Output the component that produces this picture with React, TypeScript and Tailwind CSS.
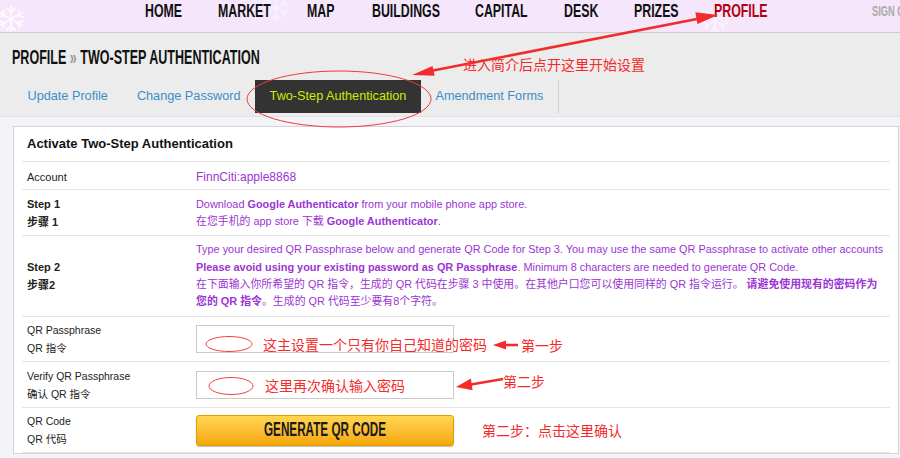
const heavy = "font-['Liberation_Sans',sans-serif] font-bold";
const body = "font-['Liberation_Sans','Noto_Sans_CJK_SC',sans-serif]";
const cjkRed = "font-['Noto_Sans_CJK_SC',sans-serif] text-[#f52a2a] text-[14px] leading-[20px] whitespace-nowrap";

// widths are the squeezed widths of each word in the reference
const navItems = [
  { label: "HOME", w: "w-[37px]" },
  { label: "MARKET", w: "w-[53px]" },
  { label: "MAP", w: "w-[29px]" },
  { label: "BUILDINGS", w: "w-[67px]" },
  { label: "CAPITAL", w: "w-[53px]" },
  { label: "DESK", w: "w-[34px]" },
  { label: "PRIZES", w: "w-[44px]" },
  { label: "PROFILE", w: "w-[51px]" },
];
const tabs = ["Update Profile", "Change Password", "Two-Step Authentication", "Amendment Forms"];

function Snowflake({ className }: { className: string }) {
  return (
    <svg className={className} viewBox="0 0 30 30" fill="none" stroke="#ffffff" strokeWidth="2" strokeLinecap="round">
      <path d="M15 2v26M3.7 8.5l22.6 13M3.7 21.5l22.6-13" />
      <path d="M11 4l4 4 4-4M11 26l4-4 4 4M3 13l5 -1.5-1-5M27 17l-5 1.5 1 5M3 17l5 1.5-1 5M27 13l-5-1.5 1-5" />
    </svg>
  );
}

function TopNav() {
  return (
    <header className="relative h-[33px] bg-[#f5e6fc] border-b border-[#cccccc] overflow-hidden">
      <Snowflake className="absolute left-[-4px] top-[4px] w-[30px] h-[30px] opacity-80" />
      <Snowflake className="absolute left-[262px] top-[-6px] w-[28px] h-[28px] opacity-40" />
      <Snowflake className="absolute left-[700px] top-[6px] w-[30px] h-[30px] opacity-50" />
      <nav className={`relative flex items-center h-[22px] pl-[145px] gap-[36px] ${heavy}`}>
        {navItems.map((item) => (
          <span key={item.label} className={`${item.w} shrink-0 leading-[20px]`}>
            <span
              className={`inline-block origin-left scale-x-[0.65] text-[19px] whitespace-nowrap ${
                item.label === "PROFILE" ? "text-[#b3000e]" : "text-[#111111]"
              }`}
            >
              {item.label}
            </span>
          </span>
        ))}
        <span className="ml-[71px] w-[40px] shrink-0 leading-[20px]">
          <span className="inline-block origin-left scale-x-[0.62] text-[15px] text-[#a9a9a9] whitespace-nowrap">
            SIGN OUT
          </span>
        </span>
      </nav>
    </header>
  );
}

function PageHeader() {
  return (
    <section className="h-[84px] bg-[#ececec] border-b border-[#e2e2e2]">
      <h1 className={`pt-[13px] pl-[12px] h-[34px] leading-[22px] text-[21px] text-[#111111] ${heavy}`}>
        <span className="inline-block w-[248px]">
          <span className="inline-block origin-left scale-x-[0.597] whitespace-nowrap">
            PROFILE <span className="text-[#9a9a9a]">»</span> TWO-STEP AUTHENTICATION
          </span>
        </span>
      </h1>
      <div className={`mt-[13px] ml-[13px] flex h-[33px] text-[12.7px] ${body}`}>
        {tabs.map((t) => {
          const active = t === "Two-Step Authentication";
          return (
            <div
              key={t}
              className={`flex items-center px-[14.5px] whitespace-nowrap ${
                active ? "bg-[#333333] text-[#c8ee00]" : "text-[#3b8ec9]"
              } ${t === "Amendment Forms" ? "border-r border-[#cfcfcf]" : ""}`}
            >
              {t}
            </div>
          );
        })}
      </div>
    </section>
  );
}

function Row({
  label,
  className = "",
  children,
}: {
  label: React.ReactNode;
  className?: string;
  children: React.ReactNode;
}) {
  return (
    <div className={`grid grid-cols-[174px_1fr] items-center border-b border-[#e6e6e6] ${className}`}>
      <div className="pl-[5px] text-[#222222]">{label}</div>
      <div>{children}</div>
    </div>
  );
}

function InputBox() {
  return <div className="h-[28px] w-[258px] border border-[#c9c9c9] bg-white" />;
}

function Panel() {
  return (
    <div className={`ml-[13px] w-[886px] border border-[#d3d3d3] bg-white px-[8px] ${body}`}>
      <div className="flex h-[35px] items-center border-b border-[#e6e6e6] pl-[5px] text-[13px] font-bold text-[#111111]">
        Activate Two-Step Authentication
      </div>

      <Row label={<span className="text-[11px]">Account</span>} className="h-[28px]">
        <span className="text-[12px] text-[#9b35d3]">FinnCiti:apple8868</span>
      </Row>

      <Row
        label={
          <div className="text-[11px] font-bold leading-[18px]">
            <div>Step 1</div>
            <div>步骤 1</div>
          </div>
        }
        className="h-[46px]"
      >
        <div className="text-[10.9px] leading-[17px] text-[#9b35d3] whitespace-nowrap">
          <div>
            Download <b>Google Authenticator</b> from your mobile phone app store.
          </div>
          <div>
            在您手机的 app store 下载 <b>Google Authenticator</b>.
          </div>
        </div>
      </Row>

      <Row
        label={
          <div className="text-[11px] font-bold leading-[18px]">
            <div>Step 2</div>
            <div>步骤2</div>
          </div>
        }
        className="h-[81px]"
      >
        <div className="text-[10.9px] leading-[17.3px] text-[#9b35d3] whitespace-nowrap">
          <div>
            Type your desired QR Passphrase below and generate QR Code for Step 3. You may use the same QR Passphrase to
            activate other accounts
          </div>
          <div>
            <b>Please avoid using your existing password as QR Passphrase</b>. Minimum 8 characters are needed to
            generate QR Code.
          </div>
          <div>
            在下面输入你所希望的 QR 指令，生成的 QR 代码在步骤 3 中使用。在其他户口您可以使用同样的 QR 指令运行。
            <b> 请避免使用现有的密码作为</b>
          </div>
          <div>
            <b>您的 QR 指令</b>。生成的 QR 代码至少要有8个字符。
          </div>
        </div>
      </Row>

      <Row
        label={
          <div className="text-[10.5px] leading-[18px]">
            <div>QR Passphrase</div>
            <div>QR 指令</div>
          </div>
        }
        className="h-[45px]"
      >
        <InputBox />
      </Row>

      <Row
        label={
          <div className="text-[10.5px] leading-[18px]">
            <div>Verify QR Passphrase</div>
            <div>确认 QR 指令</div>
          </div>
        }
        className="h-[46px]"
      >
        <InputBox />
      </Row>

      <Row
        label={
          <div className="text-[10.5px] leading-[18px]">
            <div>QR Code</div>
            <div>QR 代码</div>
          </div>
        }
        className="h-[45px]"
      >
        <button className="flex h-[31px] w-[258px] items-center justify-center rounded-[3px] border border-[#e39c00] bg-linear-to-b from-[#ffd64f] to-[#f6a700] shadow-[0_1px_1px_rgba(0,0,0,0.25)]">
          <span className="inline-block w-[123px] text-left leading-[20px]">
            <span className={`inline-block origin-left scale-x-[0.6] text-[19.5px] text-[#1a1a1a] whitespace-nowrap ${heavy}`}>
              GENERATE QR CODE
            </span>
          </span>
        </button>
      </Row>
    </div>
  );
}

function Annotations() {
  return (
    <>
      <svg className="pointer-events-none absolute left-0 top-0" width="900" height="458" viewBox="0 0 900 458">
        <ellipse cx="339" cy="99" rx="92" ry="28" fill="none" stroke="#f03a3a" strokeWidth="1" />
        <line x1="428" y1="71.5" x2="702" y2="18" stroke="#f22c2c" strokeWidth="2.6" />
        <polygon points="412,75 434.6,75.7 432.6,65.9" fill="#f22c2c" />
        <polygon points="718,15 697.4,24.1 695.4,12.3" fill="#f22c2c" />

        <ellipse cx="229" cy="344" rx="23" ry="7.5" fill="none" stroke="#f04040" strokeWidth="1" />
        <ellipse cx="231" cy="386" rx="22" ry="8.5" fill="none" stroke="#f04040" strokeWidth="1" />

        <line x1="503" y1="345" x2="518" y2="345" stroke="#f22c2c" strokeWidth="2.5" />
        <polygon points="493,345 506,340.5 506,349.5" fill="#f22c2c" />

        <line x1="468" y1="385" x2="503" y2="379" stroke="#f22c2c" strokeWidth="2.5" />
        <polygon points="456,387 472.6,390.2 470.9,378.4" fill="#f22c2c" />
      </svg>
      <span className={`absolute left-[463px] top-[54px] ${cjkRed}`}>进入简介后点开这里开始设置</span>
      <span className={`absolute left-[263px] top-[334px] ${cjkRed}`}>这主设置一个只有你自己知道的密码</span>
      <span className={`absolute left-[521px] top-[335px] ${cjkRed}`}>第一步</span>
      <span className={`absolute left-[265px] top-[375px] ${cjkRed}`}>这里再次确认输入密码</span>
      <span className={`absolute left-[503px] top-[371px] ${cjkRed}`}>第二步</span>
      <span className={`absolute left-[482px] top-[420px] ${cjkRed}`}>第二步：点击这里确认</span>
    </>
  );
}

export default function App() {
  return (
    <div className="relative h-[458px] w-[900px] overflow-hidden bg-[#f3f4f7]">
      <TopNav />
      <PageHeader />
      <main className="pt-[9px]">
        <Panel />
      </main>
      <Annotations />
    </div>
  );
}
